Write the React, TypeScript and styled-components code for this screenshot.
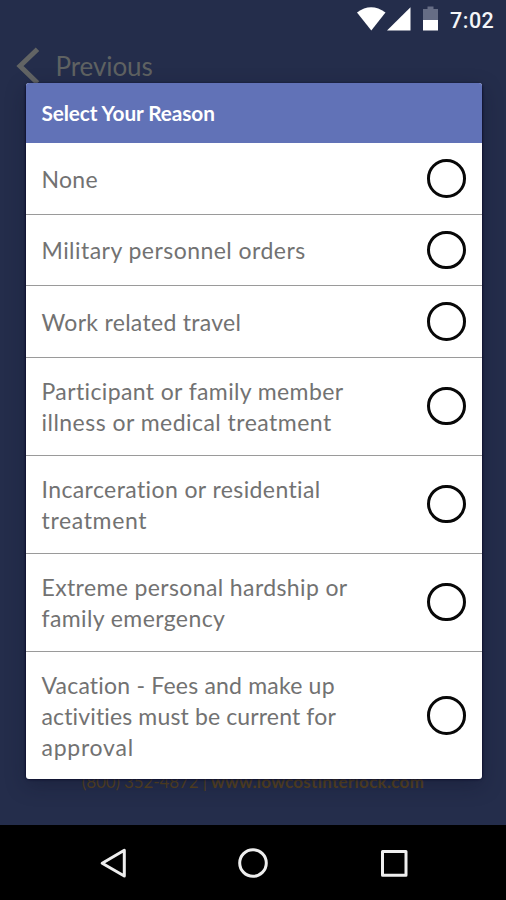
import React from "react";
import styled, { createGlobalStyle } from "styled-components";

const GlobalStyle = createGlobalStyle`
  html, body { margin: 0; padding: 0; overflow: hidden; background: #242d4b; }
  * { box-sizing: border-box; }
`;

const Screen = styled.div`
  position: relative;
  display: flex;
  flex-direction: column;
  width: 506px;
  height: 900px;
  overflow: hidden;
  background: #242d4b;
  font-family: Lato, Carlito, Calibri, sans-serif;
`;

const StatusBar = styled.header`
  display: flex;
  justify-content: flex-end;
  height: 40px;
  padding-right: 11px;
`;

const StatusIcons = styled.svg`
  width: 95px;
  height: 40px;
  flex: none;
`;

const Clock = styled.time`
  width: 45px;
  color: #f4f5f8;
  font: 500 21.5px/41px Roboto, sans-serif;
  letter-spacing: 0.5px;
  white-space: nowrap;
`;

const BackBar = styled.div`
  display: flex;
  align-items: center;
  height: 52px;
  padding-left: 16px;
`;

const BackIcon = styled.svg`
  width: 39.5px;
  height: 52px;
  flex: none;
`;

const BackLabel = styled.span`
  color: #5f6262;
  font-size: 26px;
  line-height: 52px;
  letter-spacing: -0.1px;
`;

const Page = styled.main`
  display: flex;
  flex: 1;
  align-items: flex-end;
  justify-content: center;
  padding-bottom: 32px;
`;

const Contact = styled.p`
  margin: 0;
  color: #57431f;
  font-size: 17px;
  line-height: 22px;
  white-space: nowrap;
`;

const Phone = styled.span`
  letter-spacing: -0.12px;
`;

const Site = styled.span`
  font-weight: 700;
  letter-spacing: 0.28px;
`;

const NavBar = styled.nav`
  display: flex;
  justify-content: center;
  height: 75px;
  background: #000;
`;

const NavIcons = styled.svg`
  width: 506px;
  height: 75px;
`;

const Dialog = styled.section`
  position: absolute;
  top: 82.5px;
  left: 25.5px;
  width: 456.5px;
  height: 696.5px;
  overflow: hidden;
  border-radius: 3px;
  background: #fff;
`;

const DialogShade = styled.div`
  position: absolute;
  top: 84px;
  left: 26px;
  width: 456px;
  height: 695px;
  border-radius: 4px;
  box-shadow: 0 0 2px 1px rgba(8, 8, 40, 0.7), 0 6px 20px rgba(15, 18, 40, 0.35);
`;

const DialogTitle = styled.h1`
  height: 60.5px;
  margin: 0;
  padding-left: 16px;
  background: #6172b7;
  color: #fff;
  font-size: 20.8px;
  font-weight: 700;
  line-height: 60px;
  letter-spacing: -0.1px;
`;

const Options = styled.div`
  display: flex;
  flex-direction: column;
`;

const Option = styled.label<{ $height: number }>`
  display: flex;
  align-items: center;
  justify-content: space-between;
  height: ${({ $height }) => $height}px;
  padding: 0 16.5px 0 16px;
  border-bottom: 1px solid #9a9a9a;

  &:last-child {
    border-bottom: 0;
  }
`;

const OptionText = styled.span`
  display: flex;
  flex-direction: column;
  padding-top: 1.6px;
  color: #727272;
  font-size: 23px;
  line-height: 30.6px;
  white-space: nowrap;
`;

const Line = styled.span<{ $tracking: number }>`
  letter-spacing: ${({ $tracking }) => $tracking}px;
`;

const Radio = styled.input.attrs({ type: "radio", name: "reason" })`
  appearance: none;
  flex: none;
  width: 38.5px;
  height: 38.5px;
  margin: 0;
  border: 3.4px solid #080808;
  border-radius: 50%;
`;

type Reason = { height: number; lines: [string, number][] };

const reasons: Reason[] = [
  { height: 71.5, lines: [["None", 0.3]] },
  { height: 71.5, lines: [["Military personnel orders", 0.46]] },
  { height: 71.5, lines: [["Work related travel", 0.3]] },
  { height: 98, lines: [["Participant or family member", 0.38], ["illness or medical treatment", 0.47]] },
  { height: 98, lines: [["Incarceration or residential", 0.4], ["treatment", 0.65]] },
  { height: 98, lines: [["Extreme personal hardship or", 0.38], ["family emergency", 0.4]] },
  { height: 128, lines: [["Vacation - Fees and make up", 0.2], ["activities must be current for", 0.14], ["approval", 0.75]] },
];

export default function App() {
  return (
    <Screen>
      <GlobalStyle />
      <StatusBar>
        <StatusIcons viewBox="0 0 95 40">
          <path d="M2 12.4Q16 2 30.5 12.4L16.3 30.5Z" fill="#fff" />
          <path d="M32 30.5H55.5V7.2Z" fill="#fff" />
          <path d="M68 9h4.5V6.5h6V9H83v11H68z" fill="#666d85" />
          <path d="M68 20h15v10.5H68z" fill="#fff" />
        </StatusIcons>
        <Clock>7:02</Clock>
      </StatusBar>
      <BackBar>
        <BackIcon viewBox="0 0 39.5 52" fill="none">
          <path d="M21.5 9.2 4 26 21.5 43" stroke="#626464" strokeWidth="5" />
        </BackIcon>
        <BackLabel>Previous</BackLabel>
      </BackBar>
      <Page>
        <Contact>
          <Phone>(800) 352-4872 | </Phone>
          <Site>www.lowcostinterlock.com</Site>
        </Contact>
      </Page>
      <NavBar>
        <NavIcons viewBox="0 0 506 75" fill="none" stroke="#eee" strokeWidth="3" strokeLinejoin="round">
          <path d="M124.3 25.2V51L102.2 38.2Z" />
          <circle cx="253" cy="38" r="13.3" />
          <rect x="382.5" y="26.5" width="23.5" height="23.8" />
        </NavIcons>
      </NavBar>
      <DialogShade />
      <Dialog>
        <DialogTitle>Select Your Reason</DialogTitle>
        <Options>
          {reasons.map(({ height, lines }) => (
            <Option key={lines[0][0]} $height={height}>
              <OptionText>
                {lines.map(([text, tracking]) => (
                  <Line key={text} $tracking={tracking}>{text}</Line>
                ))}
              </OptionText>
              <Radio />
            </Option>
          ))}
        </Options>
      </Dialog>
    </Screen>
  );
}
